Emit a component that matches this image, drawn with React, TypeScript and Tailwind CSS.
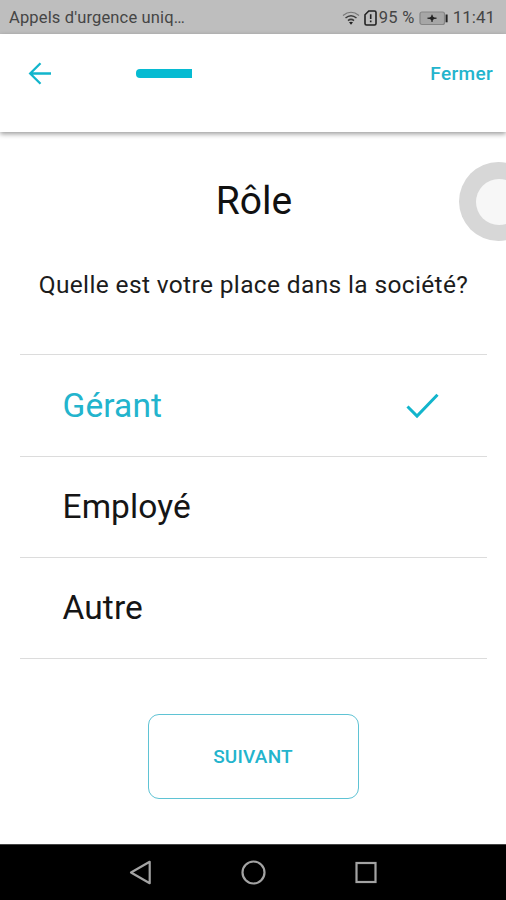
import { useState } from 'react';

interface Role {
  id: string;
  label: string;
  height: string;
}

const roles: Role[] = [
  { id: 'gerant', label: 'Gérant', height: 'h-[102px]' },
  { id: 'employe', label: 'Employé', height: 'h-[101px]' },
  { id: 'autre', label: 'Autre', height: 'h-[101px]' },
];

function StatusBar() {
  return (
    <div className="h-[34px] flex-shrink-0 bg-[#bebebe] flex items-center pl-[9px] pr-[11px] pt-[2px] text-[#454545] whitespace-nowrap">
      <span className="text-[16.5px] tracking-[0.15px]">Appels d'urgence uniq…</span>
      <div className="ml-auto flex items-center">
        {/* Wifi */}
        <svg width="18" height="16" viewBox="0 0 18 16" fill="none" stroke="#3c3c3c" className="mr-[4px]">
          <path d="M1 5.5Q9-1 17 5.5" strokeWidth="1.2" stroke="#777" />
          <path d="M3.5 8Q9 3.4 14.5 8" strokeWidth="1.5" />
          <path d="M6 10.7Q9 8.2 12 10.7" strokeWidth="1.6" />
          <path d="M7 12.3Q9 11 11 12.3L9 14.8Z" fill="#222" stroke="none" />
        </svg>
        {/* SIM alert */}
        <svg width="13" height="16" viewBox="0 0 13 16" fill="none" stroke="#222" className="mr-[2px]">
          <path d="M4.8 1H10.5Q12 1 12 2.5V13.5Q12 15 10.5 15H2.5Q1 15 1 13.5V4.8Z" strokeWidth="1.6" />
          <path d="M6.7 4.3V9M6.7 10.5V12.3" strokeWidth="1.6" />
        </svg>
        <span className="text-[16.5px] tracking-[0.3px] mr-[4px]">95 %</span>
        {/* Charging battery */}
        <svg width="29" height="15" viewBox="0 0 29 15" className="mr-[5px]">
          <rect x="1" y="1" width="24.5" height="12.5" rx="2" fill="#a6a6a6" stroke="#858585" strokeWidth="1.2" />
          <path d="M8.5 7.3H17.5M13 3.8V11" stroke="#333" strokeWidth="1.4" />
          <path d="M10 7.3L13 4.8L16 7.3L13 9.8Z" fill="#222" />
          <path d="M27.6 3.5V11.3" stroke="#222" strokeWidth="2" />
        </svg>
        <span className="text-[17px]">11:41</span>
      </div>
    </div>
  );
}

function Header() {
  return (
    <header className="relative z-10 h-[98px] flex-shrink-0 bg-white flex items-start pt-[28px] pl-[28px] pr-[13px] shadow-[0_2px_5px_rgba(0,0,0,0.4)]">
      <button className="h-[24px]" aria-label="Retour">
        <svg width="24" height="24" viewBox="0 0 24 24" fill="none" stroke="#12b5cc" strokeWidth="2.3">
          <path d="M23 11.5H2.5M12.5 1.2L2.2 11.5L12.5 21.8" />
        </svg>
      </button>
      <div className="ml-[84px] mt-[7px] h-[9px] w-[56px] rounded-l-[4px] bg-[#06bbd2]" />
      <button className="ml-auto h-[24px] text-[19px] leading-[24px] font-medium tracking-[0.35px] text-[#23b4cd]">Fermer</button>
    </header>
  );
}

function NavBar() {
  return (
    <nav className="h-[56px] flex-shrink-0 bg-black border-t border-[#444] flex items-center justify-center gap-[88px]">
      <svg width="24" height="26" viewBox="0 0 24 26" fill="none" stroke="#a3a3a3" strokeWidth="2.2">
        <path d="M21.7 1.8V23.2L3 12.5Z" strokeLinejoin="round" />
      </svg>
      <svg width="26" height="26" viewBox="0 0 26 26" fill="none" stroke="#a3a3a3" strokeWidth="2.2">
        <circle cx="13.5" cy="12.5" r="11" />
      </svg>
      <svg width="24" height="26" viewBox="0 0 24 26" fill="none" stroke="#a3a3a3" strokeWidth="2.2">
        <rect x="2.5" y="3" width="19" height="19" />
      </svg>
    </nav>
  );
}

export default function App() {
  const [selected, setSelected] = useState('gerant');

  return (
    <div className="relative w-[506px] h-[900px] overflow-hidden bg-white flex flex-col font-['Roboto',sans-serif]">
      <StatusBar />
      <Header />

      <main className="flex-1 flex flex-col items-center">
        <h1 className="mt-[45px] pl-[2px] h-[48px] text-[39px] leading-[48px] text-[#111]">Rôle</h1>
        <p className="mt-[44px] pl-[1px] h-[32px] text-[24.5px] leading-[32px] tracking-[0.36px] text-[#1c1c1c] whitespace-nowrap">
          Quelle est votre place dans la société?
        </p>

        <ul className="mt-[53px] w-[467px] border-t-[1.5px] border-[#dcdcdc]">
          {roles.map((role) => (
            <li
              key={role.id}
              onClick={() => setSelected(role.id)}
              className={`${role.height} flex items-center justify-between pl-[43px] pr-[48px] border-b-[1.5px] border-[#dcdcdc] cursor-pointer`}
            >
              <span className={`text-[33.5px] leading-[40px] tracking-[0.1px] ${selected === role.id ? 'text-[#23b4cd]' : 'text-[#151515]'}`}>
                {role.label}
              </span>
              {selected === role.id && (
                <svg width="34" height="26" viewBox="0 0 34 26" fill="none" stroke="#12b5cc" strokeWidth="3">
                  <path d="M2.5 13.5L12 23L32.5 1.8" />
                </svg>
              )}
            </li>
          ))}
        </ul>

        <button className="mt-[55px] w-[211px] h-[85px] pt-[2px] rounded-[11px] border-[1.5px] border-[#5fc3d4] text-[19px] tracking-[0.2px] font-medium text-[#23b4cd]">
          SUIVANT
        </button>
      </main>

      <NavBar />

      {/* Floating assistive dock, half off the edge */}
      <div className="absolute z-20 left-[459px] top-[162px] size-[79px] rounded-full bg-[#d7d7d7] flex items-center justify-center">
        <div className="size-[46px] rounded-full bg-[#f7f7f7]" />
      </div>
    </div>
  );
}
